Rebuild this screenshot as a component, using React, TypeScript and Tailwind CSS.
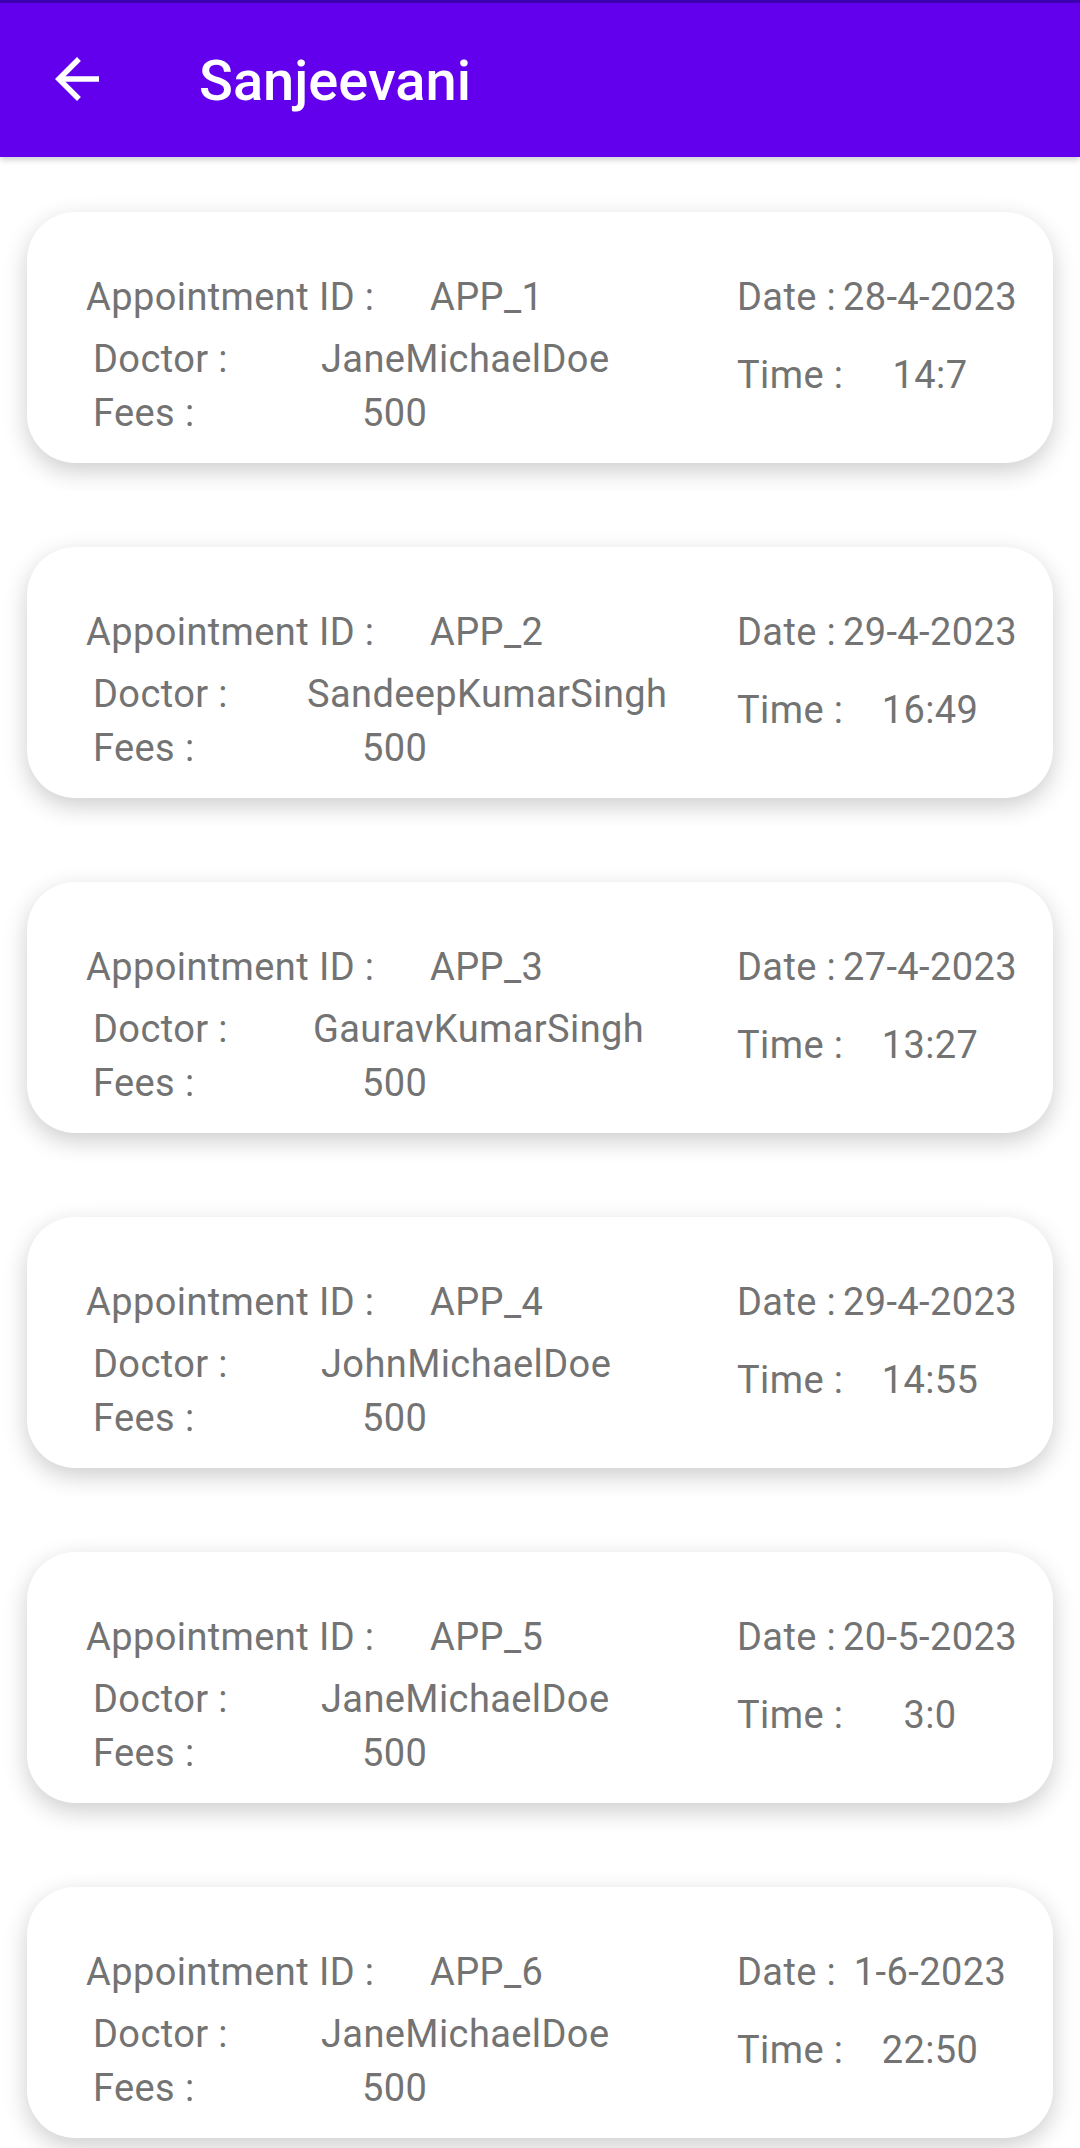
import React from 'react';

type TAppointment = {
    id: string;
    doctor: string;
    docGap: string;
    fees: string;
    date: string;
    time: string;
};

const appointments: TAppointment[] = [
    { id: 'APP_1', doctor: 'JaneMichaelDoe', docGap: 'ml-[28px]', fees: '500', date: '28-4-2023', time: '14:7' },
    { id: 'APP_2', doctor: 'SandeepKumarSingh', docGap: 'ml-[14px]', fees: '500', date: '29-4-2023', time: '16:49' },
    { id: 'APP_3', doctor: 'GauravKumarSingh', docGap: 'ml-[20px]', fees: '500', date: '27-4-2023', time: '13:27' },
    { id: 'APP_4', doctor: 'JohnMichaelDoe', docGap: 'ml-[28px]', fees: '500', date: '29-4-2023', time: '14:55' },
    { id: 'APP_5', doctor: 'JaneMichaelDoe', docGap: 'ml-[28px]', fees: '500', date: '20-5-2023', time: '3:0' },
    { id: 'APP_6', doctor: 'JaneMichaelDoe', docGap: 'ml-[28px]', fees: '500', date: '1-6-2023', time: '22:50' },
];

// one appointment card, shadow clipped by its wrapper like the android list item
const AppointmentCard = ({ item }: { item: TAppointment }) => {
    return (
        <div className="overflow-hidden px-[27px] py-[28px]">
            <div className="flex rounded-[48px] bg-white pl-[59px] pt-[63px] pb-[27px] shadow-[0_8px_24px_rgba(0,0,0,0.2)]">
                {/* left side */}
                <div className="flex w-[651px] shrink-0 flex-col">
                    <div className="flex h-[45px]">
                        <span className="w-[344px] shrink-0">Appointment ID :</span>
                        <span>{item.id}</span>
                    </div>
                    <div className="mt-[17px] flex h-[45px] pl-[7px]">
                        <span className="w-[200px] shrink-0">Doctor :</span>
                        <span className={item.docGap}>{item.doctor}</span>
                    </div>
                    <div className="mt-[9px] flex h-[45px] pl-[7px]">
                        <span className="w-[200px] shrink-0">Fees :</span>
                        <span className="ml-[69px]">{item.fees}</span>
                    </div>
                </div>
                {/* right side */}
                <div className="flex flex-col">
                    <div className="flex h-[45px]">
                        <span className="w-[96px] shrink-0 whitespace-nowrap">Date :</span>
                        <span className="w-[194px] shrink-0 text-center">{item.date}</span>
                    </div>
                    <div className="mt-[33px] flex h-[45px]">
                        <span className="w-[96px] shrink-0 whitespace-nowrap">Time :</span>
                        <span className="w-[194px] shrink-0 text-center">{item.time}</span>
                    </div>
                </div>
            </div>
        </div>
    );
};

const App = () => {
    return (
        <div className="min-h-screen bg-white font-['Roboto',sans-serif] text-[38px] leading-[45px] tracking-[0.4px] text-[#737373]">
            {/* toolbar */}
            <div className="relative z-10 shadow-[0_3px_6px_rgba(0,0,0,0.18)]">
                <div className="h-[3px] bg-[#3b00b0]"></div>
                <div className="flex h-[154px] items-center bg-[#6200ee]">
                    <svg className="ml-[44px] h-[66px] w-[66px] -mt-[3px]" viewBox="0 0 24 24" fill="#ffffff">
                        <path d="M20 11H7.83l5.59-5.59L12 4l-8 8 8 8 1.41-1.41L7.83 13H20v-2z" />
                    </svg>
                    <div className="ml-[89px] mt-[2px] text-[56px] font-medium leading-[66px] tracking-normal text-white">Sanjeevani</div>
                </div>
            </div>

            <div className="flex flex-col gap-[28px] pt-[27px]">
                {appointments.map((item) => (
                    <AppointmentCard key={item.id} item={item} />
                ))}
            </div>
        </div>
    );
};

export default App;
